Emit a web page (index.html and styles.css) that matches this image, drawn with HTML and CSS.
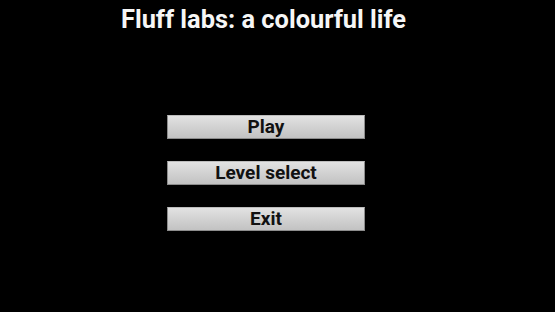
FILE: index.html
```html
<!DOCTYPE html>
<html lang="en">
<head>
    <meta charset="UTF-8">
    <title>Fluff labs: a colourful life</title>
    <link rel="stylesheet" href="styles.css">
</head>
<body>
    <div class="screen">
        <h1 class="title">Fluff labs: a colourful life</h1>
        <div class="menu">
            <button class="menu-btn">Play</button>
            <button class="menu-btn">Level select</button>
            <button class="menu-btn">Exit</button>
        </div>
    </div>
</body>
</html>
```
FILE: styles.css
```css
body {
    margin: 0;
    background-color: #000;
    font-family: Roboto, "Liberation Sans", sans-serif;
    overflow: hidden;
}
.screen {
    width: 555px;
    height: 312px;
    display: flex;
    flex-direction: column;
    align-items: center;
}
.title {
    margin: 5px 0 0 -28px;
    font-size: 25.4px;
    font-weight: bold;
    line-height: 28px;
    color: #f6f6f6;
}
.menu {
    margin: 82px 0 0 -23px;
    display: flex;
    flex-direction: column;
    gap: 22px;
}
.menu-btn {
    width: 198px;
    height: 24px;
    padding: 0;
    border: 1px solid #8c8c8c;
    border-top-color: #bdbdbd;
    background: linear-gradient(#e2e2e2, #c2c2c2);
    color: #111;
    font-family: Roboto, "Liberation Sans", sans-serif;
    font-size: 19px;
    font-weight: bold;
    line-height: 22px;
}
```
